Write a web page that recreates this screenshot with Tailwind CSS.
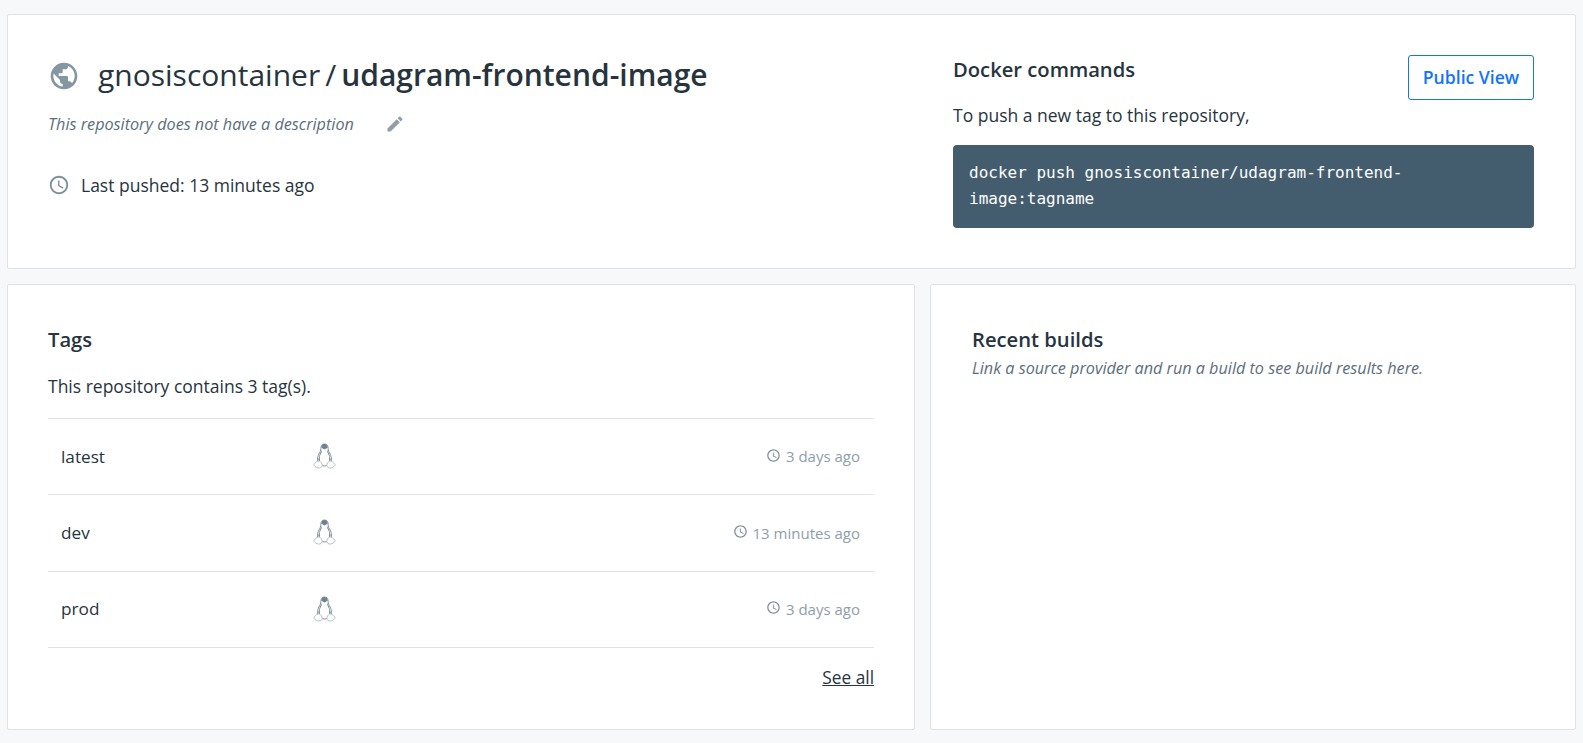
<!DOCTYPE html>
<html lang="en">
<head>
  <meta charset="UTF-8" />
  <title>gnosiscontainer/udagram-frontend-image</title>
  <script src="https://cdn.jsdelivr.net/npm/@tailwindcss/browser@4"></script>
</head>
<body class="bg-[#f7f8fa] font-['Open_Sans',sans-serif] text-[#27343e] overflow-hidden">
  <div class="h-[743px] pt-[14px] pl-[7px] pr-[7px] pb-[13px] flex flex-col gap-[15px]">
    <!-- repo header -->
    <section class="h-[255px] shrink-0 bg-white border border-[#dfe3e8] rounded-[2px] flex justify-between pl-[40px] pr-[41px]">
      <div class="pt-[40px]">
        <div class="flex items-center h-[40px]">
          <svg class="w-[32px] h-[32px] mt-[2px] text-[#8496a2]" viewBox="0 0 24 24" fill="currentColor"><path d="M12 2C6.48 2 2 6.48 2 12s4.48 10 10 10 10-4.48 10-10S17.52 2 12 2zm-1 17.93c-3.95-.49-7-3.85-7-7.93 0-.62.08-1.21.21-1.79L9 15v1c0 1.1.9 2 2 2v1.93zm6.9-2.54c-.26-.81-1-1.39-1.9-1.39h-1v-3c0-.55-.45-1-1-1H8v-2h2c.55 0 1-.45 1-1V7h2c1.1 0 2-.9 2-2v-.41c2.93 1.19 5 4.06 5 7.41 0 2.08-.8 3.97-2.1 5.39z"/></svg>
          <h1 class="ml-[18px] text-[30px] leading-[40px] whitespace-nowrap">gnosiscontainer<span class="mx-[5px]">/</span><span class="font-semibold">udagram-frontend-image</span></h1>
        </div>
        <div class="flex items-center mt-[17px] h-[24px]">
          <p class="italic text-[16.2px] text-[#5b6e7c]">This repository does not have a description</p>
          <svg class="ml-[31px] w-[20px] h-[20px] text-[#8f9ea8]" viewBox="0 0 24 24" fill="currentColor"><path d="M3 17.25V21h3.75L17.81 9.94l-3.75-3.75L3 17.25zM20.71 7.04c.39-.39.39-1.02 0-1.41l-2.34-2.34c-.39-.39-1.02-.39-1.41 0l-1.83 1.83 3.75 3.75 1.83-1.83z"/></svg>
        </div>
        <div class="flex items-center mt-[37px] h-[24px]">
          <svg class="w-[22px] h-[22px] text-[#7d8f9b]" viewBox="0 0 24 24" fill="currentColor"><path d="M11.99 2C6.47 2 2 6.48 2 12s4.47 10 9.99 10C17.52 22 22 17.52 22 12S17.52 2 11.99 2zM12 20c-4.42 0-8-3.58-8-8s3.58-8 8-8 8 3.58 8 8-3.58 8-8 8zm.5-13H11v6l5.25 3.15.75-1.23-4.5-2.67z"/></svg>
          <span class="ml-[11px] text-[17.5px]">Last pushed: 13 minutes ago</span>
        </div>
      </div>
      <div class="w-[581px] pt-[40px]">
        <div class="flex justify-between items-start">
          <div>
            <h2 class="text-[20.2px] leading-[28px] font-semibold">Docker commands</h2>
            <p class="text-[17.5px] leading-[24px] mt-[20px]">To push a new tag to this repository,</p>
          </div>
          <button class="w-[126px] h-[45px] border border-[#1173ff] rounded-[3px] text-[#1173ff] text-[17.6px] font-semibold">Public View</button>
        </div>
        <pre class="mt-[18px] h-[83px] bg-[#445d6e] rounded-[4px] pt-[15px] px-[16px] text-white font-['DejaVu_Sans_Mono',monospace] text-[16px] leading-[26px] whitespace-pre-wrap">docker push gnosiscontainer/udagram-frontend-
image:tagname</pre>
      </div>
    </section>

    <div class="flex-1 flex gap-[15px] min-h-0">
      <!-- tags -->
      <section class="w-[908px] bg-white border border-[#dfe3e8] rounded-[2px] px-[40px] pt-[40px]">
        <h2 class="text-[20.2px] leading-[28px] font-semibold">Tags</h2>
        <p class="text-[17.5px] leading-[24px] mt-[21px]">This repository contains 3 tag(s).</p>
        <ul class="mt-[20px] border-t border-[#dfe3e8]">
          <li class="h-[76.33px] border-b border-[#dfe3e8] flex items-center pl-[13px] pr-[14px]">
            <span class="w-[252px] text-[17.2px]">latest</span>
            <svg class="w-[23px] h-[27px]" viewBox="0 0 23 27"><path d="M11.5 1c-2.600 0-3.600 2-3.600 4.300 0 2.500-.9 3.700-2 5.700-1 1.900-1.600 4.500-1.200 7 1.500 3 4 5 6.800 5s5.300-2 6.800-5c.4-2.500-.2-5.100-1.200-7-1.100-2-2-3.200-2-5.700 0-2.300-1-4.300-3.600-4.300z" fill="#fff" stroke="#7d8f9b" stroke-width="1"/><path d="M11.500 1c-2.200 0-3 1.700-3 3.800l3 1.700 3-1.700c0-2.100-.8-3.800-3-3.800z" fill="#6f8290"/><path d="M8.500 7l-2 5-1.200 5 1.700 1.500-.3-5 2-4.500zM14.500 7l2 5 1.200 5-1.700 1.500.3-5-2-4.500z" fill="#6f8290"/><path d="M5 18c-1.500.5-2 1.500-3 2.200-1 .7-1.300 1.300-.8 2.300.6 1.200 2.800 2.300 4.300 2.500 1.800.2 3.500-.8 3.700-2.500.1-1-.3-2-1-3-.7-1-2-1.800-3.200-1.500zM18 18c1.500.5 2 1.500 3 2.200 1 .7 1.300 1.300.8 2.300-.6 1.200-2.800 2.300-4.300 2.500-1.800.2-3.500-.8-3.700-2.500-.1-1 .3-2 1-3 .7-1 2-1.800 3.200-1.500z" fill="#fff" stroke="#b4bfc6" stroke-width="1"/></svg>
            <span class="ml-auto flex items-center text-[15px] text-[#8f9ea8]">
              <svg class="w-[15px] h-[15px] mr-[5px] mt-[-3px] text-[#7d8f9b]" viewBox="0 0 24 24" fill="currentColor"><path d="M11.99 2C6.47 2 2 6.48 2 12s4.47 10 9.99 10C17.52 22 22 17.52 22 12S17.52 2 11.99 2zM12 20c-4.42 0-8-3.58-8-8s3.58-8 8-8 8 3.58 8 8-3.58 8-8 8zm.5-13H11v6l5.25 3.15.75-1.23-4.5-2.67z"/></svg>3 days ago</span>
          </li>
          <li class="h-[76.33px] border-b border-[#dfe3e8] flex items-center pl-[13px] pr-[14px]">
            <span class="w-[252px] text-[17.2px]">dev</span>
            <svg class="w-[23px] h-[27px]" viewBox="0 0 23 27"><path d="M11.5 1c-2.600 0-3.600 2-3.600 4.300 0 2.500-.9 3.700-2 5.700-1 1.900-1.600 4.500-1.200 7 1.500 3 4 5 6.800 5s5.300-2 6.800-5c.4-2.500-.2-5.100-1.200-7-1.100-2-2-3.200-2-5.700 0-2.300-1-4.300-3.600-4.300z" fill="#fff" stroke="#7d8f9b" stroke-width="1"/><path d="M11.500 1c-2.200 0-3 1.700-3 3.800l3 1.700 3-1.700c0-2.100-.8-3.800-3-3.800z" fill="#6f8290"/><path d="M8.500 7l-2 5-1.200 5 1.700 1.500-.3-5 2-4.500zM14.500 7l2 5 1.200 5-1.700 1.500.3-5-2-4.500z" fill="#6f8290"/><path d="M5 18c-1.500.5-2 1.500-3 2.200-1 .7-1.300 1.300-.8 2.300.6 1.200 2.800 2.300 4.300 2.500 1.800.2 3.500-.8 3.700-2.500.1-1-.3-2-1-3-.7-1-2-1.800-3.200-1.500zM18 18c1.500.5 2 1.500 3 2.200 1 .7 1.300 1.300.8 2.300-.6 1.200-2.800 2.300-4.300 2.500-1.800.2-3.500-.8-3.700-2.500-.1-1 .3-2 1-3 .7-1 2-1.800 3.200-1.500z" fill="#fff" stroke="#b4bfc6" stroke-width="1"/></svg>
            <span class="ml-auto flex items-center text-[15px] text-[#8f9ea8]">
              <svg class="w-[15px] h-[15px] mr-[5px] mt-[-3px] text-[#7d8f9b]" viewBox="0 0 24 24" fill="currentColor"><path d="M11.99 2C6.47 2 2 6.48 2 12s4.47 10 9.99 10C17.52 22 22 17.52 22 12S17.52 2 11.99 2zM12 20c-4.42 0-8-3.58-8-8s3.58-8 8-8 8 3.58 8 8-3.58 8-8 8zm.5-13H11v6l5.25 3.15.75-1.23-4.5-2.67z"/></svg>13 minutes ago</span>
          </li>
          <li class="h-[76.33px] border-b border-[#dfe3e8] flex items-center pl-[13px] pr-[14px]">
            <span class="w-[252px] text-[17.2px]">prod</span>
            <svg class="w-[23px] h-[27px]" viewBox="0 0 23 27"><path d="M11.5 1c-2.600 0-3.600 2-3.600 4.300 0 2.500-.9 3.700-2 5.700-1 1.900-1.600 4.500-1.200 7 1.500 3 4 5 6.800 5s5.300-2 6.800-5c.4-2.500-.2-5.100-1.200-7-1.100-2-2-3.200-2-5.700 0-2.300-1-4.300-3.600-4.300z" fill="#fff" stroke="#7d8f9b" stroke-width="1"/><path d="M11.500 1c-2.200 0-3 1.700-3 3.800l3 1.700 3-1.700c0-2.100-.8-3.800-3-3.800z" fill="#6f8290"/><path d="M8.500 7l-2 5-1.200 5 1.700 1.500-.3-5 2-4.500zM14.500 7l2 5 1.200 5-1.700 1.500.3-5-2-4.500z" fill="#6f8290"/><path d="M5 18c-1.500.5-2 1.500-3 2.200-1 .7-1.300 1.300-.8 2.300.6 1.200 2.800 2.300 4.300 2.500 1.800.2 3.500-.8 3.700-2.500.1-1-.3-2-1-3-.7-1-2-1.800-3.200-1.500zM18 18c1.500.5 2 1.500 3 2.200 1 .7 1.300 1.300.8 2.300-.6 1.200-2.800 2.300-4.300 2.500-1.800.2-3.500-.8-3.700-2.500-.1-1 .3-2 1-3 .7-1 2-1.800 3.200-1.500z" fill="#fff" stroke="#b4bfc6" stroke-width="1"/></svg>
            <span class="ml-auto flex items-center text-[15px] text-[#8f9ea8]">
              <svg class="w-[15px] h-[15px] mr-[5px] mt-[-3px] text-[#7d8f9b]" viewBox="0 0 24 24" fill="currentColor"><path d="M11.99 2C6.47 2 2 6.48 2 12s4.47 10 9.99 10C17.52 22 22 17.52 22 12S17.52 2 11.99 2zM12 20c-4.42 0-8-3.58-8-8s3.58-8 8-8 8 3.58 8 8-3.58 8-8 8zm.5-13H11v6l5.25 3.15.75-1.23-4.5-2.67z"/></svg>3 days ago</span>
          </li>
        </ul>
        <div class="flex justify-end mt-[18px]">
          <a href="#" class="text-[17.3px] leading-[24px] underline">See all</a>
        </div>
      </section>

      <!-- builds -->
      <section class="flex-1 bg-white border border-[#dfe3e8] rounded-[2px] px-[41px] pt-[40px]">
        <h2 class="text-[20.2px] leading-[28px] font-semibold">Recent builds</h2>
        <p class="italic text-[16.2px] leading-[20px] mt-[5px] text-[#5b6e7c]">Link a source provider and run a build to see build results here.</p>
      </section>
    </div>
  </div>
</body>
</html>
